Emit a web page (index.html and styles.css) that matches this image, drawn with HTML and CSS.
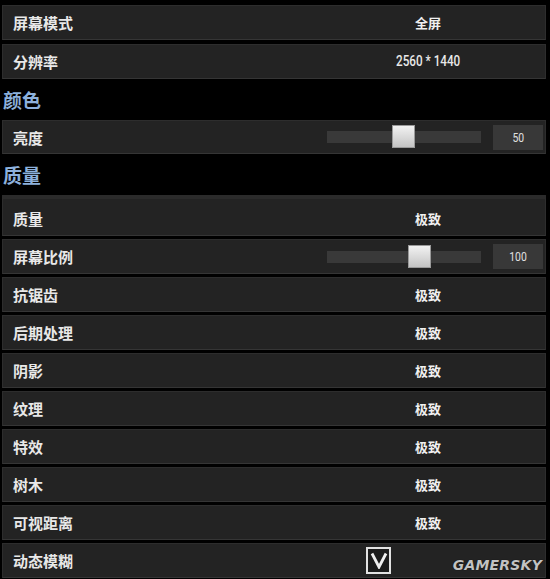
FILE: index.html
```html
<!DOCTYPE html>
<html lang="zh">
<head>
<meta charset="utf-8">
<link rel="stylesheet" href="styles.css">
</head>
<body>
<div class="panel">
  <div class="group top">
    <div class="row"><span class="label">屏幕模式</span><span class="value">全屏</span></div>
    <div class="row"><span class="label">分辨率</span><span class="value"><span class="num">2560 * 1440</span></span></div>
  </div>
  <div class="heading">颜色</div>
  <div class="row slider-row short">
    <span class="label">亮度</span>
    <div class="track"><div class="thumb" style="left:65px"></div></div>
    <div class="box"><span class="boxnum">50</span></div>
  </div>
  <div class="heading">质量</div>
  <div class="group bottom">
    <div class="row first"><span class="label">质量</span><span class="value">极致</span></div>
    <div class="row slider-row">
      <span class="label">屏幕比例</span>
      <div class="track"><div class="thumb" style="left:81px"></div></div>
      <div class="box"><span class="boxnum">100</span></div>
    </div>
    <div class="row"><span class="label">抗锯齿</span><span class="value">极致</span></div>
    <div class="row"><span class="label">后期处理</span><span class="value">极致</span></div>
    <div class="row"><span class="label">阴影</span><span class="value">极致</span></div>
    <div class="row"><span class="label">纹理</span><span class="value">极致</span></div>
    <div class="row"><span class="label">特效</span><span class="value">极致</span></div>
    <div class="row"><span class="label">树木</span><span class="value">极致</span></div>
    <div class="row"><span class="label">可视距离</span><span class="value">极致</span></div>
    <div class="row last">
      <span class="label">动态模糊</span>
      <span class="check"><svg width="18" height="17" viewBox="0 0 18 17"><polyline points="2,1.5 9,15 16,1.5" fill="none" stroke="#efefef" stroke-width="2.8" stroke-linejoin="miter"/></svg></span>
      <span class="watermark">GAMERSKY</span>
    </div>
  </div>
</div>
</body>
</html>
```
FILE: styles.css
```css
html, body {
  margin: 0;
  padding: 0;
  background: #000;
}
body {
  width: 550px;
  height: 579px;
  overflow: hidden;
  font-family: "Noto Sans CJK SC", "Noto Sans", sans-serif;
}
.panel {
  display: flex;
  flex-direction: column;
  padding: 5px 4px 0 2px;
}
.group {
  display: flex;
  flex-direction: column;
}
.group.top {
  gap: 4px;
}
.group.bottom {
  gap: 3px;
}
.row {
  position: relative;
  display: flex;
  align-items: center;
  height: 35px;
  box-sizing: border-box;
  background: #232323;
  border: 1px solid #2d2d2d;
  border-bottom-color: #353535;
  padding: 0 16px 0 10px;
}
.row.short {
  height: 34px;
}
.row.first {
  height: 41px;
  border-top: 4px solid #2b2b2b;
  padding-top: 2px;
}
.label {
  flex: 1;
  color: #e8e8e8;
  font-size: 15px;
  font-weight: 700;
  line-height: 1;
}
.value {
  width: 202px;
  text-align: center;
  color: #f0f0f0;
  font-size: 13px;
  font-weight: 700;
  line-height: 1;
}
.num {
  display: inline-block;
  font-family: "Roboto", "Noto Sans", sans-serif;
  font-weight: 500;
  font-size: 15px;
  transform: scaleX(0.78);
  color: #e8e8e8;
}
.heading {
  height: 41px;
  display: flex;
  align-items: center;
  padding-left: 1px;
  color: #8db1dc;
  font-size: 19px;
  font-weight: 700;
  line-height: 1;
}
.slider-row {
  padding-right: 2px;
}
.track {
  position: relative;
  width: 154px;
  height: 12px;
  background: #393939;
  margin-right: 12px;
}
.thumb {
  position: absolute;
  top: -6px;
  width: 23px;
  height: 23px;
  box-sizing: border-box;
  border: 1px solid #9a9a9a;
  background: linear-gradient(#f2f2f2, #c4c4c4);
}
.box {
  width: 50px;
  height: 25px;
  background: #383838;
  color: #e0e0e0;
  display: flex;
  align-items: center;
  justify-content: center;
}
.boxnum {
  display: inline-block;
  font-family: "Roboto", "Noto Sans", sans-serif;
  font-size: 13px;
  transform: scaleX(0.8);
}
.check {
  width: 25px;
  height: 27px;
  box-sizing: border-box;
  border: 2px solid #e2e2e2;
  background: #1c1c1c;
  display: flex;
  align-items: center;
  justify-content: center;
  margin-right: 138px;
}
.watermark {
  position: absolute;
  right: 3px;
  bottom: 4px;
  color: #c2c2c2;
  font-family: "DejaVu Sans", "Liberation Sans", sans-serif;
  font-style: italic;
  font-weight: 700;
  font-size: 14px;
  letter-spacing: 0.2px;
  text-shadow: 0 0 1px #000;
}
```
